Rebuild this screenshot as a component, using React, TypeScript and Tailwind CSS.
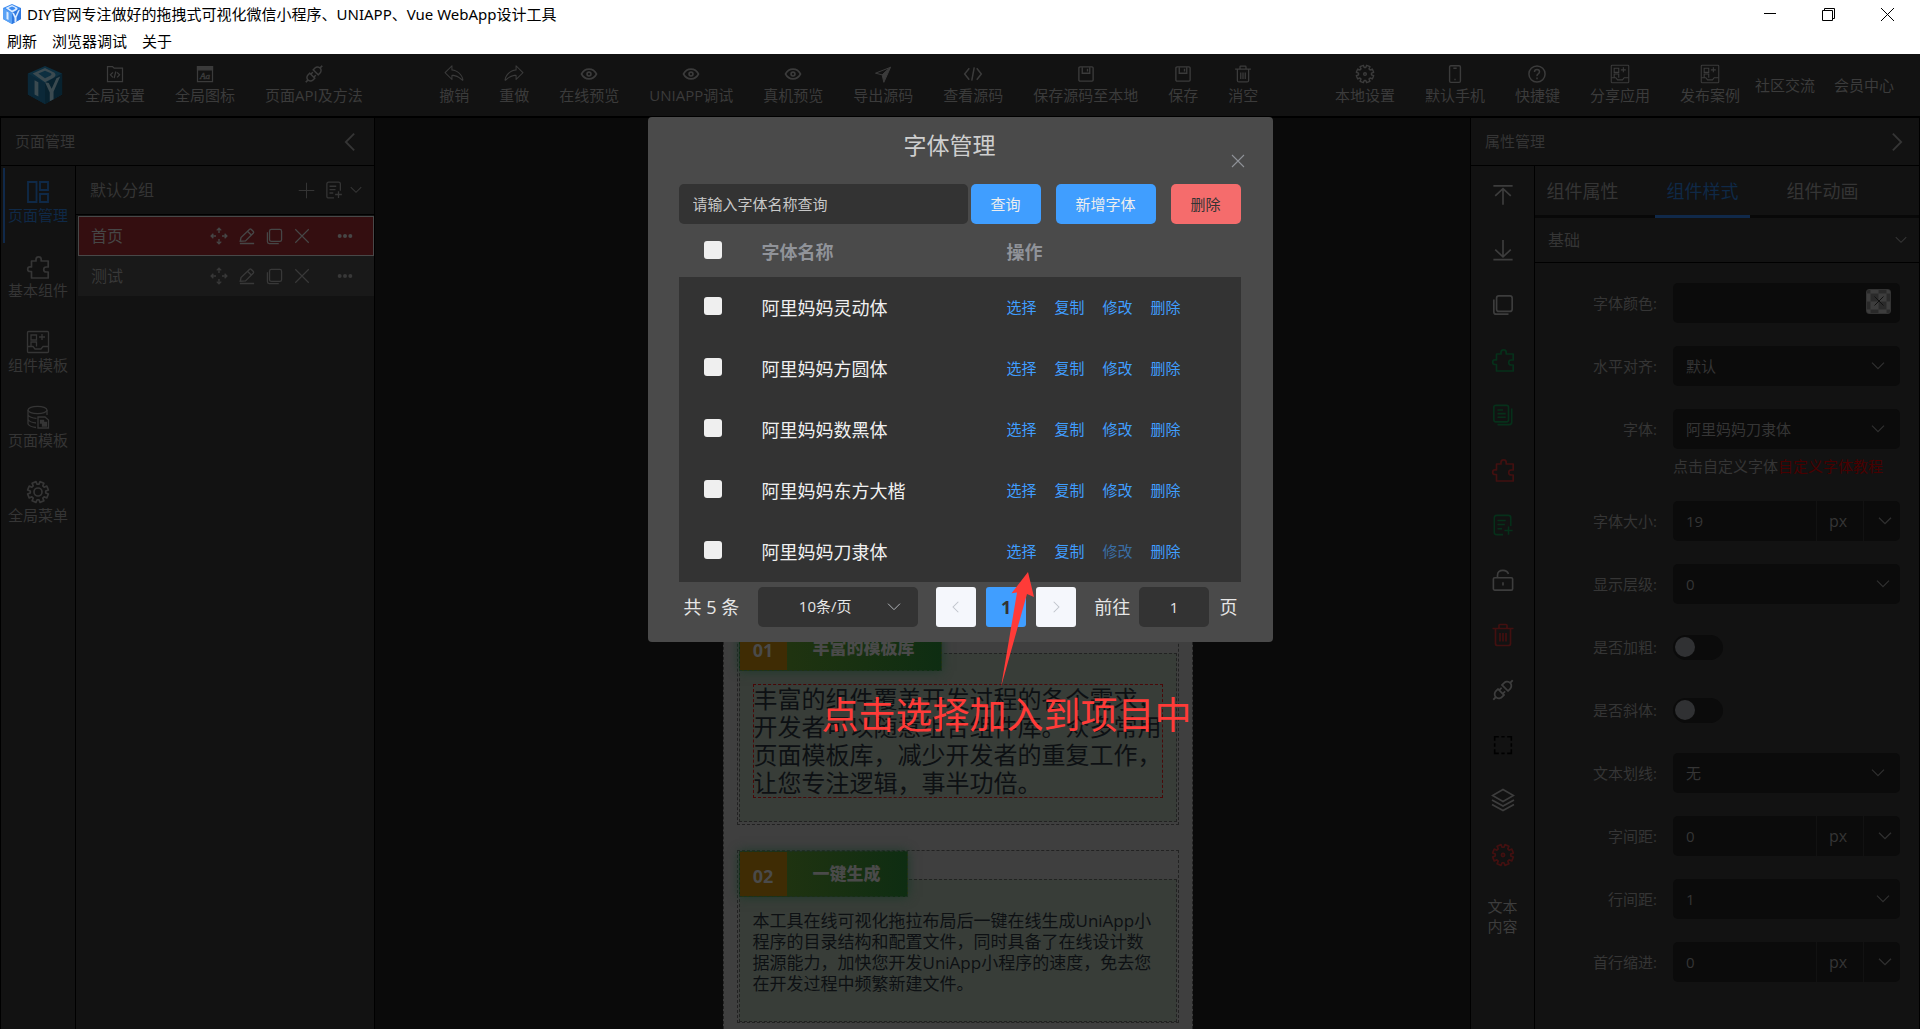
import { useState } from "react";
import type { ReactNode } from "react";
import { AiOutlineApi } from "react-icons/ai";
import { PiShareFatLight } from "react-icons/pi";

type IconProps = { className?: string };

function Svg({ className = "size-5", children, w = 1.5 }: IconProps & { children: ReactNode; w?: number }) {
  return (
    <svg viewBox="0 0 24 24" className={className} fill="none" stroke="currentColor" strokeWidth={w} aria-hidden="true">
      {children}
    </svg>
  );
}

/** Eight-toothed gear outline, built from alternating outer and inner points. */
const GEAR_PATH = (() => {
  const pts: string[] = [];
  for (let i = 0; i < 8; i++) {
    const a = ((i + 0.5) * Math.PI) / 4;
    for (const [da, r] of [[-0.27, 7.8], [-0.2, 10.6], [0.2, 10.6], [0.27, 7.8]]) {
      pts.push(`${(12 + r * Math.sin(a + da)).toFixed(2)} ${(12 - r * Math.cos(a + da)).toFixed(2)}`);
    }
  }
  return `M${pts.join("L")}Z`;
})();

const GearIcon = ({ className, hole = 1.6 }: IconProps & { hole?: number }) => (
  <Svg className={className} w={1.7}>
    <path d={GEAR_PATH} strokeLinejoin="round" />
    <circle cx="12" cy="12" r={hole} />
  </Svg>
);
const CodeFileIcon = ({ className }: IconProps) => (
  <Svg className={className}>
    <path d="M3 3h6l2 2h10v16H3zM9.500 10l-3 3 3 3M14.500 10l3 3-3 3M13 9l-2 8" />
  </Svg>
);
const GlyphIcon = ({ className }: IconProps) => (
  <svg viewBox="0 0 24 24" className={className} fill="none" stroke="currentColor" strokeWidth="1.500" aria-hidden="true">
    <path d="M3 3h18v18H3z" />
    <path d="M3 3h18v4H3z" fill="currentColor" />
    <text x="12" y="18" textAnchor="middle" fontSize="11" fontStyle="italic" fontFamily="Liberation Serif, serif" fill="currentColor" strokeWidth="0.500">
      Aa
    </text>
  </svg>
);
const EyeIcon = ({ className }: IconProps) => (
  <Svg className={className} w={2.2}>
    <path d="M2 12c2.500-4.800 6-6.500 10-6.500s7.500 1.700 10 6.500c-2.500 4.800-6 6.500-10 6.500S4.500 16.800 2 12z" />
    <circle cx="12" cy="12" r="2.600" />
  </Svg>
);
const SendIcon = ({ className }: IconProps) => (
  <Svg className={className} w={1.2}>
    <path d="M21 4L13 22l-2-9z" fill="currentColor" />
    <path d="M21 4L3 11l8 2z" />
  </Svg>
);
const CodeIcon = ({ className }: IconProps) => (
  <Svg className={className} w={1.8}>
    <path d="M7.500 5L2 12l5.500 7M16.500 5l5.500 7-5.500 7M13.500 4l-3 16" />
  </Svg>
);
const SaveIcon = ({ className }: IconProps) => (
  <Svg className={className} w={1.8}>
    <rect x="2.500" y="2.500" width="19" height="19" rx="1.500" />
    <path d="M7 3v8h10V3M14 5v3.500" />
  </Svg>
);
const TrashIcon = ({ className }: IconProps) => (
  <Svg className={className} w={1.7}>
    <path d="M1.500 5.500h21M8 5V2.500Q8 1.500 9 1.500h6q1 0 1 1V5M4.500 6v14.500q0 2 2 2h11q2 0 2-2V6M9 10v8.500M12 10v8.500M15 10v8.500" />
  </Svg>
);
const PhoneIcon = ({ className }: IconProps) => (
  <Svg className={className} w={1.7}>
    <rect x="5.500" y="2" width="13" height="20" rx="1.500" />
    <path d="M10 5h4M11.200 18.500h1.600" />
  </Svg>
);
const HelpIcon = ({ className }: IconProps) => (
  <Svg className={className} w={1.8}>
    <circle cx="12" cy="12" r="9.700" />
    <path d="M9 9.500Q9 6.500 12 6.500t3 2.800q0 1.600-1.600 2.500T12 14.500M12 16.300v2" />
  </Svg>
);
const TemplateIcon = ({ className }: IconProps) => (
  <Svg className={className} w={1.3}>
    <rect x="1.500" y="1.500" width="21" height="21" rx="1" />
    <path d="M5 5h5.500v5H5zM5 16.500V12h5.500v4.500M16 4v6M13 7h6M1.500 16.500H7l2 2.500h6l2-2.500h5.500" />
  </Svg>
);
const LayoutIcon = ({ className }: IconProps) => (
  <Svg className={className} w={1.9}>
    <path d="M2 2h8.500v20H2zM14 2h8v8h-8zM14 14h8v8h-8z" />
  </Svg>
);
const PuzzleIcon = ({ className }: IconProps) => (
  <Svg className={className} w={1.7}>
    <path d="M5.500 6H10V4.500a2.600 2.600 0 0 1 5.200 0V6h7v6h-2a2.400 2.400 0 0 0 0 5h2v6H5.500v-6.500H4a2.300 2.300 0 0 1 0-4.600h1.500z" strokeLinejoin="round" />
  </Svg>
);
const DatabaseIcon = ({ className }: IconProps) => (
  <Svg className={className} w={1.3}>
    <ellipse cx="11.500" cy="5" rx="9.500" ry="3.700" />
    <path d="M2 5v14q2 3 8 3.500M21 5v5M2 10q2 3 8.500 3.300M2 14.500q2 3 8 3.500M12 12h7l3.500 3v8H12z" />
    <path d="M14.500 15.500h3v2h3v3.500h-4v-3h-2z" fill="currentColor" />
  </Svg>
);
const MoveIcon = ({ className }: IconProps) => (
  <Svg className={className} w={1.8}>
    <path d="M12 2v6M12 16v6M2 12h6M16 12h6M9 4.500L12 1.500l3 3M9 19.500l3 3 3-3M4.500 9l-3 3 3 3M19.500 9l3 3-3 3" />
  </Svg>
);
const EditIcon = ({ className }: IconProps) => (
  <Svg className={className} w={1.8}>
    <path d="M3 19l1-5L15.500 3q1-.8 2 0l3 3q.8 1 0 2L10 18.500zM13 6l5 5M2.500 22h19" />
  </Svg>
);
const CopyIcon = ({ className }: IconProps) => (
  <Svg className={className} w={1.8}>
    <rect x="5" y="2" width="17" height="17" rx="2.500" />
    <path d="M2 6v13.500Q2 22 4.500 22H18" />
  </Svg>
);
const CloseIcon = ({ className, w = 1.6 }: IconProps & { w?: number }) => (
  <Svg className={className} w={w}>
    <path d="M3 3l18 18M21 3L3 21" />
  </Svg>
);
const DotsIcon = ({ className }: IconProps) => (
  <svg viewBox="0 0 24 24" className={className} fill="currentColor" aria-hidden="true">
    <circle cx="4" cy="12" r="3" />
    <circle cx="12" cy="12" r="3" />
    <circle cx="20" cy="12" r="3" />
  </svg>
);
const DocPlusIcon = ({ className }: IconProps) => (
  <Svg className={className} w={1.7}>
    <path d="M12 22.500H5q-2.500 0-2.500-2V4Q2.500 1.500 5 1.500h13q2.500 0 2.500 2.500v9M6 7h9M6 11.500h8M6 16h5M18 13.500v9M13.500 18h9" />
  </Svg>
);
const DocsIcon = ({ className }: IconProps) => (
  <Svg className={className} w={1.8}>
    <rect x="2" y="1.500" width="16" height="18" rx="2" />
    <path d="M6 6.500h6M6 10.500h9M6 14.500h9M21.500 5v15q0 2.500-2.500 2.500H6" />
  </Svg>
);
const TopIcon = ({ className }: IconProps) => (
  <Svg className={className} w={1.8}>
    <path d="M1.500 2h21M12 22.500V6M3.500 13L12 5l8.500 8" />
  </Svg>
);
const BottomIcon = ({ className }: IconProps) => (
  <Svg className={className} w={1.8}>
    <path d="M1.500 22.500h21M12 1v18M3.500 11.500L12 19.500l8.500-8" />
  </Svg>
);
const UnlockIcon = ({ className }: IconProps) => (
  <Svg className={className} w={1.8}>
    <rect x="1.500" y="9.500" width="21" height="13.500" rx="1.500" />
    <path d="M6 9.500V7q0-5.500 6-5.500 4.500 0 6 4M12 14.500v3.500" />
  </Svg>
);
const FrameIcon = ({ className }: IconProps) => (
  <Svg className={className} w={1.9}>
    <path d="M2 7V2h5M10 2h4M17 2h5v5M22 10v4M22 17v5h-5M14 22h-4M7 22H2v-5M2 14v-4" />
  </Svg>
);
const LayersIcon = ({ className }: IconProps) => (
  <Svg className={className} w={1.7}>
    <path d="M12 1.500L22.500 7.500 12 13.500 1.500 7.500zM1 12l11 6 11-6M1 16.500l11 6 11-6" />
  </Svg>
);
const Chevron = ({ className, d = "M3 7l9 9 9-9", w = 1.5 }: IconProps & { d?: string; w?: number }) => (
  <Svg className={className} w={w}>
    <path d={d} />
  </Svg>
);

const LogoIcon = ({ className }: IconProps) => (
  <svg viewBox="0 0 36 40" className={className} aria-hidden="true">
    <path d="M18 0l18 8v22l-18 10L0 30V8z" fill="var(--logo-base)" />
    <path d="M18 18v22L0 30V8z" fill="var(--logo-left)" />
    <path d="M18 18v22l18-10V8z" fill="var(--logo-right)" />
    <path d="M5 8l13-6 10 5q3 3-2 6l-8 4zM11 8l7 5 6-3q2-2-1-3l-5-2z" fill="var(--logo-ink)" fillRule="evenodd" />
    <path d="M7 15l4 2v15l-4-2zM18 17l4 1 3 6 5-11 4-2-7 16v8l-4 2v-9z" fill="var(--logo-ink)" />
  </svg>
);

type Tool = { label: string; icon: ReactNode };

const GLOBAL_TOOLS: Tool[] = [
  { label: "全局设置", icon: <CodeFileIcon className="size-5" /> },
  { label: "全局图标", icon: <GlyphIcon className="size-5" /> },
  { label: "页面API及方法", icon: <AiOutlineApi className="size-[22px]" /> },
];
const EDIT_TOOLS: Tool[] = [
  { label: "撤销", icon: <PiShareFatLight className="size-[22px] -scale-x-100" /> },
  { label: "重做", icon: <PiShareFatLight className="size-[22px]" /> },
  { label: "在线预览", icon: <EyeIcon className="size-[18px]" /> },
  { label: "UNIAPP调试", icon: <EyeIcon className="size-[18px]" /> },
  { label: "真机预览", icon: <EyeIcon className="size-[18px]" /> },
  { label: "导出源码", icon: <SendIcon className="size-5" /> },
  { label: "查看源码", icon: <CodeIcon className="size-5" /> },
  { label: "保存源码至本地", icon: <SaveIcon className="size-[18px]" /> },
  { label: "保存", icon: <SaveIcon className="size-[18px]" /> },
  { label: "消空", icon: <TrashIcon className="size-[18px]" /> },
];
const ACCOUNT_TOOLS: Tool[] = [
  { label: "本地设置", icon: <GearIcon className="size-5" /> },
  { label: "默认手机", icon: <PhoneIcon className="size-5" /> },
  { label: "快捷键", icon: <HelpIcon className="size-5" /> },
  { label: "分享应用", icon: <TemplateIcon className="size-5" /> },
  { label: "发布案例", icon: <TemplateIcon className="size-5" /> },
];

function ToolGroup({ tools }: { tools: Tool[] }) {
  return (
    <>
      {tools.map((t) => (
        <button key={t.label} type="button" className="flex flex-col items-center px-[15px]">
          <span className="flex h-5 items-center">{t.icon}</span>
          <span className="text-[15px] leading-[22px]">{t.label}</span>
        </button>
      ))}
    </>
  );
}

function TitleBar() {
  return (
    <div className="bg-white text-[15px] text-black">
      <div className="flex h-7 items-center">
        <LogoIcon className="ml-[3px] h-6 w-[18px] [--logo-base:#3d8bf0] [--logo-ink:#dcecff] [--logo-left:#5aa2f5] [--logo-right:#2f78e0]" />
        <h1 className="ml-1.5 flex-1 font-['Noto_Sans','Noto_Sans_CJK_SC',sans-serif]">DIY官网专注做好的拖拽式可视化微信小程序、UNIAPP、Vue WebApp设计工具</h1>
        <div className="flex items-center gap-[46px] pr-[26px]">
          <button type="button" aria-label="最小化">
            <svg viewBox="0 0 12 12" className="size-3" stroke="#000" aria-hidden="true"><path d="M0 5.500h12" /></svg>
          </button>
          <button type="button" aria-label="还原">
            <svg viewBox="0 0 13 13" className="size-[13px]" fill="none" stroke="#000" aria-hidden="true"><path d="M.5 2.500h10v10H.5zM2.500 2.500v-2h10v10h-2" /></svg>
          </button>
          <button type="button" aria-label="关闭窗口">
            <svg viewBox="0 0 13 13" className="size-[13px]" stroke="#000" aria-hidden="true"><path d="M0 0l13 13M13 0L0 13" /></svg>
          </button>
        </div>
      </div>
      <nav className="flex h-[26px] items-center gap-[15px] pl-[7px]">
        <button type="button">刷新</button>
        <button type="button">浏览器调试</button>
        <button type="button">关于</button>
      </nav>
    </div>
  );
}

function Header() {
  return (
    <header className="flex h-16 items-center justify-between border-b-2 border-black bg-[#121212] text-[#3b3b3b]">
      <div className="flex items-center">
        <LogoIcon className="mr-[7px] ml-[27px] h-[38px] w-9 [--logo-base:#0d2f40] [--logo-ink:#3b4a50] [--logo-left:#0b2838] [--logo-right:#08222f]" />
        <ToolGroup tools={GLOBAL_TOOLS} />
      </div>
      <div className="flex items-center">
        <ToolGroup tools={EDIT_TOOLS} />
      </div>
      <div className="flex items-center text-[15px]">
        <ToolGroup tools={ACCOUNT_TOOLS} />
        <a href="#community">社区交流</a>
        <a href="#member" className="mr-[26px] ml-[19px]">会员中心</a>
      </div>
    </header>
  );
}

const SIDE_TABS: Tool[] = [
  { label: "页面管理", icon: <LayoutIcon className="size-6" /> },
  { label: "基本组件", icon: <PuzzleIcon className="size-6" /> },
  { label: "组件模板", icon: <TemplateIcon className="size-6" /> },
  { label: "页面模板", icon: <DatabaseIcon className="size-6" /> },
  { label: "全局菜单", icon: <GearIcon hole={4} className="size-6" /> },
];
const PAGES = [
  { name: "首页", active: true },
  { name: "测试", active: false },
];

function PagePanel() {
  return (
    <aside className="flex w-[375px] shrink-0 flex-col border-x border-black bg-[#121212] text-[#353535]">
      <div className="flex h-12 items-center justify-between border-b border-black pr-3.5 pl-3.5 text-[15px]">
        <h2>页面管理</h2>
        <button type="button" aria-label="收起">
          <Chevron className="size-5" d="M17 2L7 12l10 10" w={2.2} />
        </button>
      </div>
      <div className="flex flex-1">
        <nav className="flex w-[75px] flex-col border-r border-black pt-0.5 text-[15px]">
          {SIDE_TABS.map((t, i) => (
            <button
              key={t.label}
              type="button"
              className={`mx-0.5 flex h-[75px] flex-col items-center border-l-2 pt-3 pr-0.5 ${i === 0 ? "border-[#10294a] text-[#0f2947]" : "border-transparent"}`}
            >
              {t.icon}
              <span className="leading-[22px] whitespace-nowrap">{t.label}</span>
            </button>
          ))}
        </nav>
        <div className="flex-1">
          <div className="flex h-[49px] items-center border-b border-black pr-[11px] pl-3.5">
            <h3 className="flex-1 text-base">默认分组</h3>
            <button type="button" aria-label="新增页面">
              <Svg className="size-[17px]" w={1.4}><path d="M12 1v22M1 12h22" /></Svg>
            </button>
            <button type="button" aria-label="新增分组" className="ml-2.5"><DocPlusIcon className="size-[18px]" /></button>
            <button type="button" aria-label="展开" className="ml-1.5"><Chevron className="size-3.5" w={1.8} /></button>
          </div>
          <ul className="mt-px ml-0.5">
            {PAGES.map((p) => (
              <li
                key={p.name}
                className={`flex h-10 items-center border pr-5 pl-3 text-base ${p.active ? "border-[#484848] bg-[#340e10] text-[#464646]" : "border-[#191919] bg-[#191919] text-[#383838]"}`}
              >
                <span className="flex-1">{p.name}</span>
                <div className="flex items-center gap-2.5">
                  <button type="button" aria-label="移动"><MoveIcon className="size-[18px]" /></button>
                  <button type="button" aria-label="编辑"><EditIcon className="size-[18px]" /></button>
                  <button type="button" aria-label="复制"><CopyIcon className="size-[17px]" /></button>
                  <button type="button" aria-label="删除"><CloseIcon className="size-[18px]" /></button>
                  <button type="button" aria-label="更多" className="ml-4"><DotsIcon className="size-4" /></button>
                </div>
              </li>
            ))}
          </ul>
        </div>
      </div>
    </aside>
  );
}

type Feature = { no: string; title: string; lines: string[]; selected: boolean };

const FEATURES: Feature[] = [
  {
    no: "01",
    title: "丰富的模板库",
    selected: true,
    lines: ["丰富的组件覆盖开发过程的各个需求，", "开发者可以随意组合组件库。众多常用", "页面模板库，减少开发者的重复工作，", "让您专注逻辑，事半功倍。"],
  },
  {
    no: "02",
    title: "一键生成",
    selected: false,
    lines: ["本工具在线可视化拖拉布局后一键在线生成UniApp小", "程序的目录结构和配置文件，同时具备了在线设计数", "据源能力，加快您开发UniApp小程序的速度，免去您", "在开发过程中频繁新建文件。"],
  },
];

function FeatureCard({ f }: { f: Feature }) {
  return (
    <article className={`border border-dashed border-[#222] px-px ${f.selected ? "h-[201px]" : "h-[173px]"}`}>
      {/* the ribbon hangs over the top edge of the tinted box */}
      <div className="relative flex h-[46px] w-fit items-center border border-dashed border-[#1c3020] bg-gradient-to-r from-[#24350f] to-[#0e2d12] text-[#4a4a4a] shadow-[0_0_10px_#1e3a2a]">
        <span className="flex h-full w-[47px] items-center justify-center bg-[#3f2c04] pt-1 text-lg font-bold">{f.no}</span>
        <h4 className="px-[26px] text-[17px] font-black">{f.title}</h4>
      </div>
      <div className={`-mt-[18px] border border-dashed border-[#222] bg-[#383d38] px-[13px] pt-[30px] ${f.selected ? "h-[169px]" : "h-[143px]"}`}>
        <p
          className={`whitespace-nowrap text-[#0d1013] ${f.selected ? "border border-dashed border-[#4a0808] text-2xl leading-7" : "text-[17px] leading-[21px]"}`}
        >
          {f.lines.map((l) => (
            <span key={l} className="block">{l}</span>
          ))}
        </p>
      </div>
    </article>
  );
}

function Canvas() {
  return (
    <main className="flex min-w-0 flex-1 justify-center overflow-hidden bg-[#0a0a0a] pl-[70px]">
      <div className="flex w-[470px] shrink-0 flex-col gap-[25px] border-x border-dashed border-[#222] bg-[#3f3f3f] px-[13px] pt-[506px]">
        {FEATURES.map((f) => (
          <FeatureCard key={f.no} f={f} />
        ))}
      </div>
    </main>
  );
}

const CANVAS_TOOLS: (Tool & { color: string })[] = [
  { label: "置顶", color: "", icon: <TopIcon className="size-[22px]" /> },
  { label: "置底", color: "", icon: <BottomIcon className="size-[22px]" /> },
  { label: "复制", color: "", icon: <CopyIcon className="size-[22px]" /> },
  { label: "存为组件", color: "text-[#06301a]", icon: <PuzzleIcon className="size-6" /> },
  { label: "复制样式", color: "text-[#06301a]", icon: <DocsIcon className="size-[22px]" /> },
  { label: "移出组件", color: "text-[#421010]", icon: <PuzzleIcon className="size-6" /> },
  { label: "添加", color: "text-[#06301a]", icon: <DocPlusIcon className="size-[22px]" /> },
  { label: "解锁", color: "", icon: <UnlockIcon className="size-[22px]" /> },
  { label: "删除", color: "text-[#421010]", icon: <TrashIcon className="size-6" /> },
  { label: "接口", color: "", icon: <AiOutlineApi className="size-[26px]" /> },
  { label: "选框", color: "text-black", icon: <FrameIcon className="size-5" /> },
  { label: "图层", color: "", icon: <LayersIcon className="size-6" /> },
  { label: "设置", color: "text-[#421010]", icon: <GearIcon className="size-6" /> },
];

const BOX = "h-10 rounded-[5px] bg-[#0b0b0b]";

function SelectBox({ id, value, wide }: { id: string; value: string; wide?: boolean }) {
  return (
    <div className={`grid ${BOX}`}>
      <select id={id} className="col-start-1 row-start-1 h-10 w-full appearance-none bg-transparent px-[13px] text-[15px] outline-none">
        <option>{value}</option>
      </select>
      <Chevron w={1.8} className={`pointer-events-none col-start-1 row-start-1 size-4 self-center justify-self-end text-[#303030] ${wide ? "mr-[9px]" : "mr-3.5"}`} />
    </div>
  );
}

function UnitBox({ id, value }: { id: string; value: string }) {
  return (
    <div className={`flex items-center ${BOX}`}>
      <input id={id} defaultValue={value} className="h-10 min-w-0 flex-1 bg-transparent pl-[13px] text-[15px] outline-none" />
      <span className="flex h-10 w-[47px] items-center justify-center border-l border-[#121212] pr-1 text-base">px</span>
      <button type="button" aria-label="单位" className="flex h-10 w-[37px] items-center justify-center border-l border-[#121212] pl-1.5 text-[#303030]">
        <Chevron className="size-4" w={2} />
      </button>
    </div>
  );
}

function ToggleBox({ id }: { id: string }) {
  return (
    <div className="flex h-10 items-center">
      <input
        id={id}
        type="checkbox"
        role="switch"
        className="flex h-[25px] w-[50px] appearance-none items-center rounded-full bg-[#0b0b0b] pl-0.5 before:size-5 before:rounded-full before:bg-[#303133] checked:before:ml-[25px]"
      />
    </div>
  );
}

type Field = { label: string; kind: "color" | "select" | "unit" | "number" | "toggle"; value?: string; hint?: boolean };

const FIELDS: Field[] = [
  { label: "字体颜色", kind: "color" },
  { label: "水平对齐", kind: "select", value: "默认" },
  { label: "字体", kind: "select", value: "阿里妈妈刀隶体", hint: true },
  { label: "字体大小", kind: "unit", value: "19" },
  { label: "显示层级", kind: "number", value: "0" },
  { label: "是否加粗", kind: "toggle" },
  { label: "是否斜体", kind: "toggle" },
  { label: "文本划线", kind: "select", value: "无" },
  { label: "字间距", kind: "unit", value: "0" },
  { label: "行间距", kind: "number", value: "1" },
  { label: "首行缩进", kind: "unit", value: "0" },
];

function FieldControl({ id, field }: { id: string; field: Field }) {
  const value = field.value ?? "";
  if (field.kind === "unit") return <UnitBox id={id} value={value} />;
  if (field.kind === "toggle") return <ToggleBox id={id} />;
  if (field.kind === "color") {
    return (
      <div className={`flex items-center pr-[9px] ${BOX}`}>
        <input id={id} className="h-10 min-w-0 flex-1 bg-transparent px-[13px] text-[15px] outline-none" />
        <button type="button" aria-label="选择颜色" className="mb-1 flex size-[25px] items-center justify-center rounded-[3px] border border-[#333] bg-[conic-gradient(#3d3d3d_25%,#2a2a2a_0_50%,#3d3d3d_0_75%,#2a2a2a_0)] bg-[length:16px_16px] bg-center text-[#111]">
          <CloseIcon className="size-3" w={2} />
        </button>
      </div>
    );
  }
  return <SelectBox id={id} value={value} wide={field.kind === "number"} />;
}

const STYLE_TABS = ["组件属性", "组件样式", "组件动画"];

function PropertyPanel() {
  const [tab, setTab] = useState("组件样式");

  return (
    <aside className="flex w-[450px] shrink-0 flex-col border-x border-black bg-[#121212] text-[#353535]">
      <div className="flex h-12 items-center justify-between border-b border-black pr-3 pl-3.5 text-[15px]">
        <h2>属性管理</h2>
        <button type="button" aria-label="收起">
          <Chevron className="size-5" d="M7 2l10 10L7 22" w={2.2} />
        </button>
      </div>
      <div className="flex flex-1">
        <div className="flex w-16 flex-col border-r border-black pt-px text-[15px] text-[#3d3d3d]">
          {CANVAS_TOOLS.map((t) => (
            <button key={t.label} type="button" aria-label={t.label} className={`flex h-[55px] items-center justify-center ${t.color}`}>
              {t.icon}
            </button>
          ))}
          <button type="button" className="mx-auto mt-3.5 w-[30px] leading-5">文本内容</button>
        </div>
        <div className="min-w-0 flex-1">
          <div role="tablist" className="flex h-[52px] gap-[25px] border-b-[3px] border-[#080808]">
            {STYLE_TABS.map((t) => (
              <button
                key={t}
                type="button"
                role="tab"
                aria-selected={t === tab}
                onClick={() => setTab(t)}
                className={`-mb-[3px] w-[95px] border-b-[3px] text-lg whitespace-nowrap ${t === tab ? "border-[#10294a] text-[#0f2947]" : "border-transparent"}`}
              >
                {t}
              </button>
            ))}
          </div>
          <div className="flex h-[45px] items-center justify-between border-b border-black pr-[11px] pl-[13px] text-base">
            <h3>基础</h3>
            <Chevron className="size-3.5" w={1.8} />
          </div>
          <form className="flex flex-col gap-[23px] pt-5 pr-[19px] text-[15px]">
            {FIELDS.map((f, i) => (
              <div key={f.label} className="grid grid-cols-[122px_minmax(0,1fr)] gap-x-4">
                <label htmlFor={`field-${i}`} className="flex h-10 items-center justify-end">{f.label}:</label>
                <FieldControl id={`field-${i}`} field={f} />
                {f.hint && (
                  <p className="col-start-2 h-[29px] pt-1.5 leading-[23px] whitespace-nowrap">
                    点击自定义字体
                    <a href="#font-guide" className="text-[#480000]">自定义字体教程</a>
                  </p>
                )}
              </div>
            ))}
          </form>
        </div>
      </div>
    </aside>
  );
}

const FONTS = ["阿里妈妈灵动体", "阿里妈妈方圆体", "阿里妈妈数黑体", "阿里妈妈东方大楷", "阿里妈妈刀隶体"];
const ACTIONS = ["选择", "复制", "修改", "删除"];
const CHECKBOX = "block size-[18px] appearance-none rounded-[3px] bg-[#efefef] checked:bg-[#409eff]";

function FontDialog() {
  return (
    <div role="dialog" aria-labelledby="font-dialog-title" className="relative w-[625px] rounded-sm bg-[#4a4a4a] pr-8 pb-[15px] pl-[31px]">
      <h2 id="font-dialog-title" className="pt-3 pr-5 text-center text-[23px] leading-8 text-[#cfcfcf]">字体管理</h2>
      <button type="button" aria-label="关闭" className="absolute top-9 right-[27px] text-[#909399]">
        <CloseIcon className="size-4" />
      </button>
      <div className="mt-[23px] flex text-[15px]">
        <input
          aria-label="字体名称"
          placeholder="请输入字体名称查询"
          className="h-10 min-w-0 flex-1 rounded-[5px] bg-[#333] px-3.5 text-white outline-none placeholder:text-[#c8c8c8]"
        />
        <button type="button" className="ml-[3px] h-10 w-[70px] rounded-[5px] bg-[#409eff] text-[#eee]">查询</button>
        <button type="button" className="ml-[15px] h-10 w-[100px] rounded-[5px] bg-[#409eff] text-[#eee]">新增字体</button>
        <button type="button" className="ml-[15px] h-10 w-[70px] rounded-[5px] bg-[#f56c6c] text-[#333]">删除</button>
      </div>
      <table className="w-full table-fixed text-left text-lg">
        <thead className="text-[#909399]">
          <tr className="h-[53px]">
            <th className="w-[83px] pb-0.5 pl-[25px]"><input type="checkbox" aria-label="全选" className={CHECKBOX} /></th>
            <th className="w-[245px] pt-0.5 font-bold">字体名称</th>
            <th className="pt-0.5 font-bold">操作</th>
          </tr>
        </thead>
        <tbody className="bg-[#333] text-[#f0f0f0]">
          {FONTS.map((name, row) => (
            <tr key={name} className="h-[61px]">
              <td className="pb-1 pl-[25px]"><input type="checkbox" aria-label={name} className={CHECKBOX} /></td>
              <td>{name}</td>
              <td>
                <div className="flex gap-[18px] text-[15px] text-[#409eff]">
                  {ACTIONS.map((a) => (
                    <button key={a} type="button" className={row === 4 && a === "修改" ? "text-[#3a6ea5]" : ""}>{a}</button>
                  ))}
                </div>
              </td>
            </tr>
          ))}
        </tbody>
      </table>
      <div className="mt-[5px] flex items-center pr-[3px] pl-[5px] text-lg text-[#e6e6e6]">
        <span>共 5 条</span>
        <div className="ml-[19px] grid h-10 w-40 items-center rounded-[5px] bg-[#333]">
          <select aria-label="每页条数" className="col-start-1 row-start-1 h-10 w-full appearance-none bg-transparent pr-[26px] text-center text-[15px] outline-none">
            <option>10条/页</option>
          </select>
          <Chevron className="pointer-events-none col-start-1 row-start-1 mr-4 size-4 justify-self-end text-[#b0b3b8]" />
        </div>
        <button type="button" aria-label="上一页" className="ml-[18px] flex h-10 w-10 items-center justify-center rounded-[3px] bg-[#f5f7fc] text-[#c0c4cc]">
          <Chevron className="size-3.5" d="M16 3l-9 9 9 9" w={1.8} />
        </button>
        <button type="button" className="ml-2.5 h-10 w-10 rounded-[3px] bg-[#409eff] font-bold text-[#333]">1</button>
        <button type="button" aria-label="下一页" className="ml-2.5 flex h-10 w-10 items-center justify-center rounded-[3px] bg-[#f5f7fc] text-[#c0c4cc]">
          <Chevron className="size-3.5" d="M8 3l9 9-9 9" w={1.8} />
        </button>
        <label htmlFor="page-no" className="ml-[18px]">前往</label>
        <input id="page-no" defaultValue="1" className="ml-[9px] h-10 w-[70px] rounded-[5px] bg-[#333] text-center text-[15px] outline-none" />
        <span className="ml-auto">页</span>
      </div>

      {/* hint arrow and caption drawn over the page */}
      <svg viewBox="0 0 40 118" className="pointer-events-none absolute top-[453px] left-[348px] h-[118px] w-10" aria-hidden="true">
        <path d="M32 2L38 27 31 24 5 117 21 22.500 15.500 23.300z" fill="#ff3b38" />
      </svg>
      <p className="pointer-events-none absolute top-[571px] left-[174px] text-[37px] leading-[54px] whitespace-nowrap text-[#ff3b38]">点击选择加入到项目中</p>
    </div>
  );
}

export default function App() {
  return (
    <div className="relative flex h-screen flex-col overflow-hidden bg-[#0a0a0a] font-['Open_Sans','Noto_Sans_CJK_SC',sans-serif]">
      <TitleBar />
      <Header />
      <div className="flex min-h-0 flex-1">
        <PagePanel />
        <Canvas />
        <PropertyPanel />
      </div>
      <div className="pointer-events-none absolute inset-x-0 top-[117px] flex justify-center [&>*]:pointer-events-auto">
        <FontDialog />
      </div>
    </div>
  );
}
